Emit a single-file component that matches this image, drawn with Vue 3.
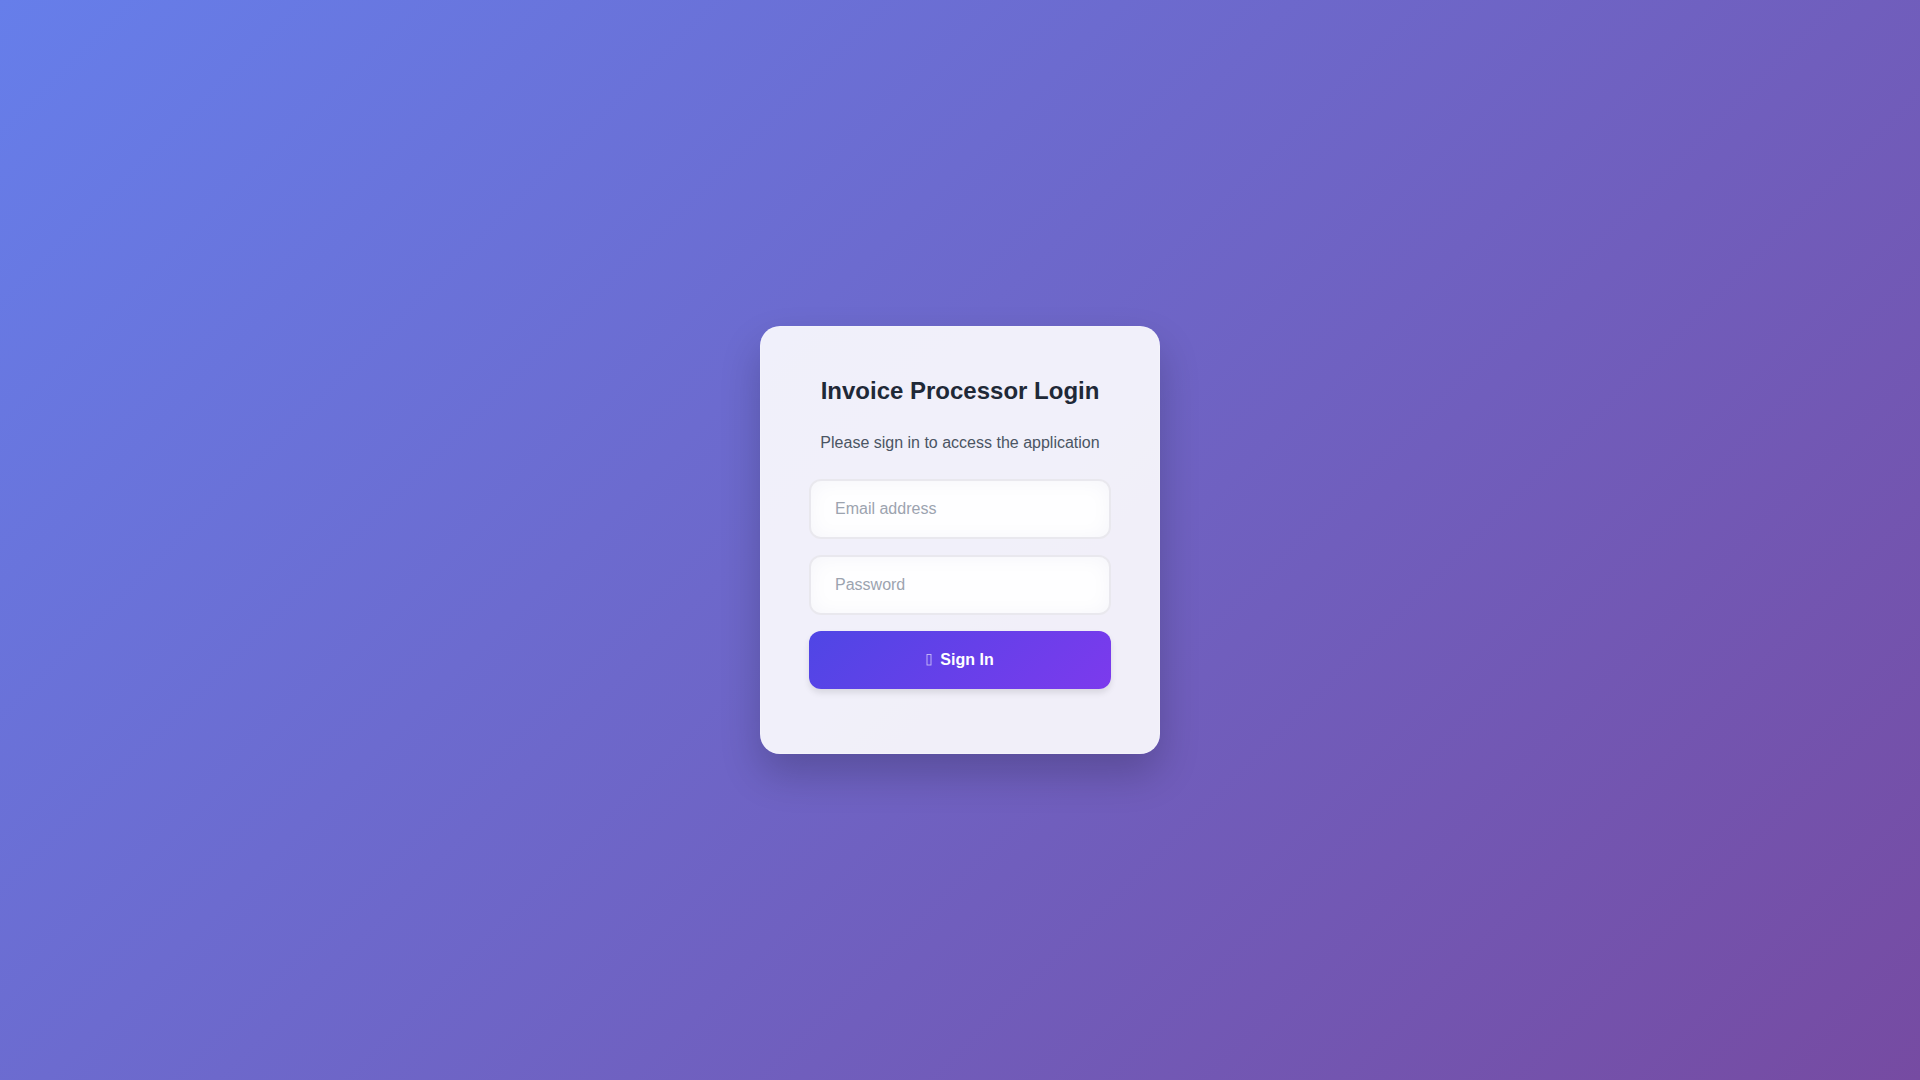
<script setup>
import { ref } from 'vue'

const email = ref('')
const password = ref('')
</script>

<template>
  <main class="login-page">
    <section class="card">
      <h1 class="title">Invoice Processor Login</h1>
      <p class="subtitle">Please sign in to access the application</p>
      <form class="form" @submit.prevent>
        <input v-model="email" class="field" type="email" placeholder="Email address" aria-label="Email address" />
        <input v-model="password" class="field" type="password" placeholder="Password" aria-label="Password" />
        <button class="submit" type="submit">
          <svg class="icon" viewBox="0 0 6 12" aria-hidden="true">
            <rect x="1" y="0.5" width="4" height="10.5" fill="none" stroke="#ffffff" stroke-opacity="0.65" stroke-width="0.9" />
          </svg>
          <span>Sign In</span>
        </button>
      </form>
    </section>
  </main>
</template>

<style>
body {
  margin: 0;
}
</style>

<style scoped>
.login-page {
  box-sizing: border-box;
  min-height: 100vh;
  padding: 16px;
  display: flex;
  align-items: center;
  justify-content: center;
  background: linear-gradient(135deg, #667eea 0%, #764ba2 100%);
  font-family: "Liberation Sans", Arial, sans-serif;
  font-size: 16px;
}

.card {
  box-sizing: border-box;
  width: 100%;
  max-width: 400px;
  padding: 48px 48px 64px;
  border: 1px solid rgba(255, 255, 255, 0.2);
  border-radius: 20px;
  background: rgba(255, 255, 255, 0.9);
  box-shadow: 0 20px 40px rgba(0, 0, 0, 0.2);
  text-align: center;
}

.title {
  margin: 0 0 24px;
  color: #1f2937;
  font-size: 24px;
  font-weight: 700;
  line-height: 31px;
}

.subtitle {
  margin: 0 0 24px;
  color: #4b5563;
  line-height: 25px;
}

.form {
  display: flex;
  flex-direction: column;
  gap: 16px;
}

.field {
  box-sizing: border-box;
  width: 100%;
  height: 60px;
  padding: 16px 24px;
  border: 2px solid #e9e8ee;
  border-radius: 12px;
  outline: none;
  background: #fefeff;
  box-shadow: inset 0 1px 20px rgba(31, 38, 135, 0.04);
  color: #1f2937;
  font: inherit;
}

.field::placeholder {
  color: #9ca3af;
  opacity: 1;
}

.submit {
  display: flex;
  align-items: center;
  justify-content: center;
  gap: 8px;
  height: 58px;
  padding: 16px 24px;
  border: 0;
  border-radius: 12px;
  background: linear-gradient(135deg, #4f46e5 0%, #7c3aed 100%);
  box-shadow: 0 4px 6px rgba(0, 0, 0, 0.1);
  color: #ffffff;
  font: inherit;
  font-weight: 600;
  cursor: pointer;
}

.icon {
  width: 6px;
  height: 12px;
}
</style>
